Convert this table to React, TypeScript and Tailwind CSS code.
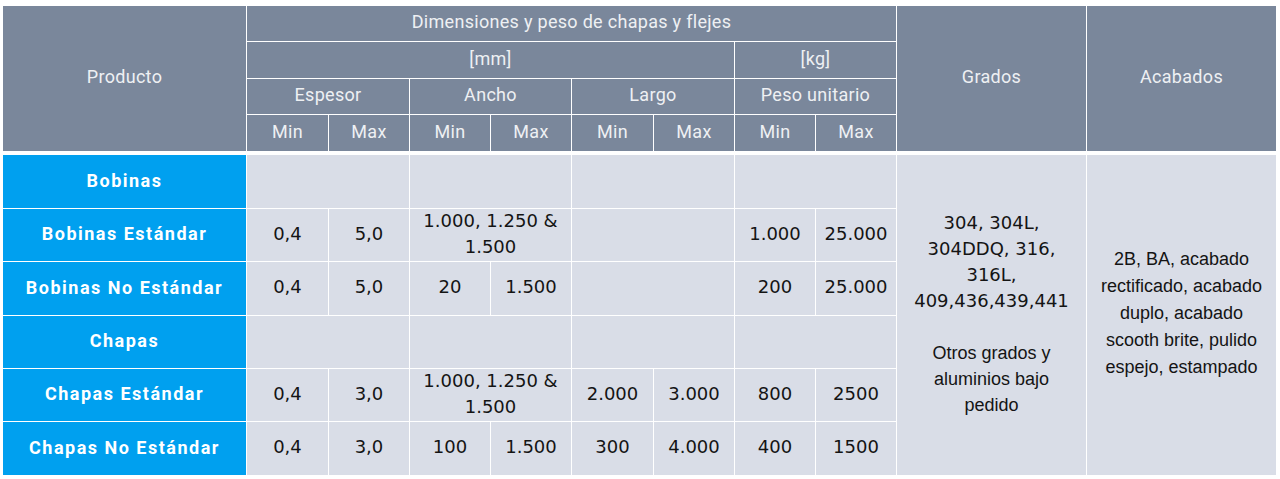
const head = "bg-[#7a879b] text-[#eef0f3] flex items-center justify-center text-[18px] tracking-[0.3px] pb-[4px]";
const prod = "bg-[#00a0ef] text-white font-bold flex items-center justify-center text-[18px] tracking-[1.5px] pb-[3px]";
const cell = "bg-[#d9dde7] text-[#141414] flex items-center justify-center text-center text-[18px] leading-[26px] pb-[3px]";

const cols = "grid grid-cols-[243px_81px_80px_80px_80px_81px_80px_80px_80px_189px_189px] gap-px";

function Num({ v }: { v: string }) {
  return <div className={cell}>{v}</div>;
}

function Empty() {
  return <div className={`${cell} col-span-2`} />;
}

export default function App() {
  return (
    <div className="bg-white w-[1280px] h-[479px] pt-[6px] pl-[3px]" style={{ fontFamily: "Roboto, sans-serif" }}>
      {/* header */}
      <div className={`${cols} grid-rows-[35px_36px_35px_36px]`}>
        <div className={`${head} row-span-4`}>Producto</div>
        <div className={`${head} col-span-8`}>Dimensiones y peso de chapas y flejes</div>
        <div className={`${head} row-span-4`}>Grados</div>
        <div className={`${head} row-span-4`}>Acabados</div>
        <div className={`${head} col-span-6`}>[mm]</div>
        <div className={`${head} col-span-2`}>[kg]</div>
        <div className={`${head} col-span-2`}>Espesor</div>
        <div className={`${head} col-span-2`}>Ancho</div>
        <div className={`${head} col-span-2`}>Largo</div>
        <div className={`${head} col-span-2`}>Peso unitario</div>
        {["Min", "Max", "Min", "Max", "Min", "Max", "Min", "Max"].map((t, i) => (
          <div key={i} className={head}>{t}</div>
        ))}
      </div>

      {/* body */}
      <div
        className={`${cols} grid-rows-[53px_52px_53px_52px_52px_53px] mt-[4px]`}
        style={{ fontFamily: "'DejaVu Sans', sans-serif" }}
      >
        <div className={prod} style={{ fontFamily: "Roboto, sans-serif" }}>Bobinas</div>
        <Empty />
        <Empty />
        <Empty />
        <Empty />
        <div className={`${cell} row-span-6 flex-col`}>
          <div>304, 304L,<br />304DDQ, 316,<br />316L,<br />409,436,439,441</div>
          <div className="h-[26px]" />
          <div style={{ fontFamily: "'Liberation Sans', Arial, sans-serif" }}>
            Otros grados y<br />aluminios bajo<br />pedido
          </div>
        </div>
        <div
          className={`${cell} row-span-6 leading-[27px] text-[18.5px]`}
          style={{ fontFamily: "'Liberation Sans', Arial, sans-serif" }}
        >
          <div>
            2B, BA, acabado<br />rectificado, acabado<br />duplo, acabado<br />scooth brite, pulido<br />espejo, estampado
          </div>
        </div>

        <div className={prod} style={{ fontFamily: "Roboto, sans-serif" }}>Bobinas Estándar</div>
        <Num v="0,4" />
        <Num v="5,0" />
        <div className={`${cell} col-span-2`}>1.000, 1.250 &<br />1.500</div>
        <Empty />
        <Num v="1.000" />
        <Num v="25.000" />

        <div className={prod} style={{ fontFamily: "Roboto, sans-serif" }}>Bobinas No Estándar</div>
        <Num v="0,4" />
        <Num v="5,0" />
        <Num v="20" />
        <Num v="1.500" />
        <Empty />
        <Num v="200" />
        <Num v="25.000" />

        <div className={prod} style={{ fontFamily: "Roboto, sans-serif" }}>Chapas</div>
        <Empty />
        <Empty />
        <Empty />
        <Empty />

        <div className={prod} style={{ fontFamily: "Roboto, sans-serif" }}>Chapas Estándar</div>
        <Num v="0,4" />
        <Num v="3,0" />
        <div className={`${cell} col-span-2`}>1.000, 1.250 &<br />1.500</div>
        <Num v="2.000" />
        <Num v="3.000" />
        <Num v="800" />
        <Num v="2500" />

        <div className={prod} style={{ fontFamily: "Roboto, sans-serif" }}>Chapas No Estándar</div>
        <Num v="0,4" />
        <Num v="3,0" />
        <Num v="100" />
        <Num v="1.500" />
        <Num v="300" />
        <Num v="4.000" />
        <Num v="400" />
        <Num v="1500" />
      </div>
    </div>
  );
}
